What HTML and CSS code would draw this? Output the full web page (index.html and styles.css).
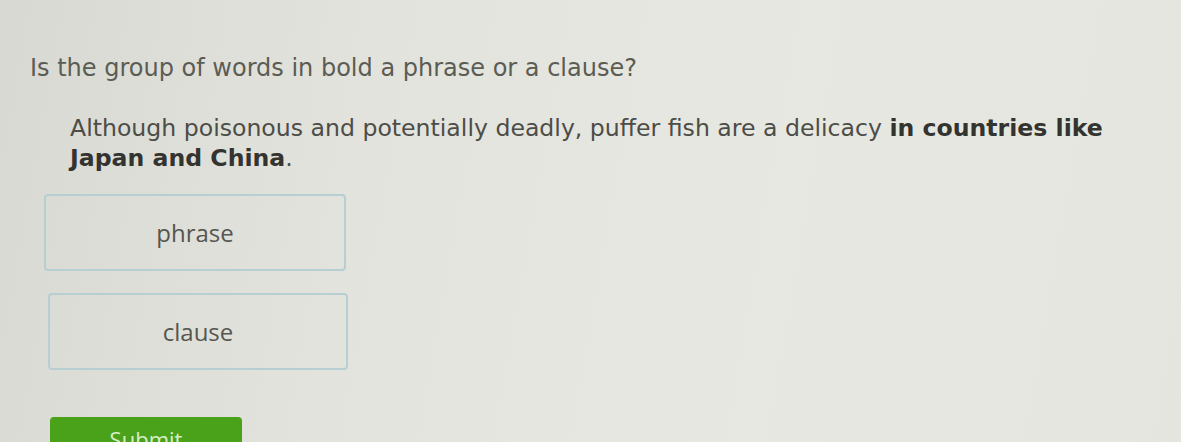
FILE: index.html
```html
<!DOCTYPE html>
<html>
<head>
<meta charset="utf-8">
<link rel="stylesheet" href="styles.css">
</head>
<body>
<main class="page">
  <p class="question">Is the group of words in bold a phrase or a clause?</p>
  <p class="passage">Although poisonous and potentially deadly, puffer fish are a delicacy <b>in countries like Japan and China</b>.</p>
  <div class="options">
    <button class="option opt-1">phrase</button>
    <button class="option opt-2">clause</button>
  </div>
  <button class="submit">Submit</button>
</main>
</body>
</html>
```
FILE: styles.css
```css
html, body {
  margin: 0;
  height: 100%;
  overflow: hidden;
}
body {
  background: linear-gradient(100deg, #d9d9d3 0%, #e3e3dd 30%, #e8e8e2 65%, #e4e5df 100%);
  font-family: "DejaVu Sans", Verdana, sans-serif;
  color: #55564f;
}
.page {
  padding: 53px 0 0 30px;
}
.question {
  margin: 0;
  font-size: 24px;
  line-height: 30px;
  color: #5b5c53;
}
.passage {
  margin: 30px 0 0 40px;
  width: 1080px;
  font-size: 23.6px;
  line-height: 30px;
  color: #4c4d48;
}
.passage b {
  color: #333330;
}
.options {
  display: flex;
  flex-direction: column;
  gap: 22px;
  margin: 21px 0 0 14px;
}
.option {
  width: 302px;
  height: 77px;
  background: transparent;
  border: 2px solid #b7cfd3;
  border-radius: 4px;
  font-family: "Open Sans", sans-serif;
  font-size: 24px;
  color: #55564f;
  padding: 0;
}
.opt-2 {
  margin-left: 4px;
  width: 300px;
}
.submit {
  display: block;
  margin: 47px 0 0 20px;
  width: 192px;
  height: 44px;
  background: #4aa11a;
  border: none;
  border-radius: 4px;
  color: #d8eecb;
  font-family: "Open Sans", sans-serif;
  font-size: 22px;
  padding: 0;
}
```
